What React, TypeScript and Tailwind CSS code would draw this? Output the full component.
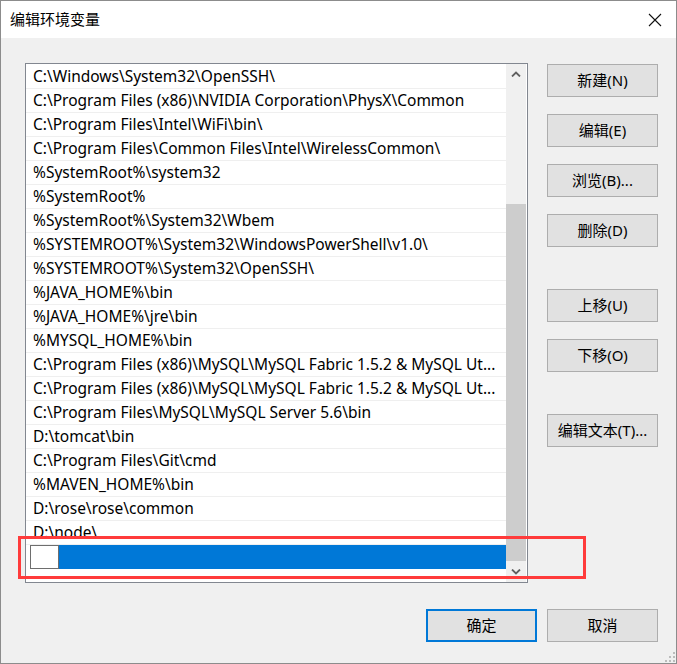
import React from "react";

const items = [
  "C:\\Windows\\System32\\OpenSSH\\",
  "C:\\Program Files (x86)\\NVIDIA Corporation\\PhysX\\Common",
  "C:\\Program Files\\Intel\\WiFi\\bin\\",
  "C:\\Program Files\\Common Files\\Intel\\WirelessCommon\\",
  "%SystemRoot%\\system32",
  "%SystemRoot%",
  "%SystemRoot%\\System32\\Wbem",
  "%SYSTEMROOT%\\System32\\WindowsPowerShell\\v1.0\\",
  "%SYSTEMROOT%\\System32\\OpenSSH\\",
  "%JAVA_HOME%\\bin",
  "%JAVA_HOME%\\jre\\bin",
  "%MYSQL_HOME%\\bin",
  "C:\\Program Files (x86)\\MySQL\\MySQL Fabric 1.5.2 & MySQL Ut...",
  "C:\\Program Files (x86)\\MySQL\\MySQL Fabric 1.5.2 & MySQL Ut...",
  "C:\\Program Files\\MySQL\\MySQL Server 5.6\\bin",
  "D:\\tomcat\\bin",
  "C:\\Program Files\\Git\\cmd",
  "%MAVEN_HOME%\\bin",
  "D:\\rose\\rose\\common",
  "D:\\node\\",
];

function Btn({ label, primary }: { label: string; primary?: boolean }) {
  return (
    <div
      className={
        "w-[111px] h-[33px] flex items-center justify-center bg-[#e1e1e1] text-[15px] text-black " +
        (primary ? "border-2 border-[#0078d7]" : "border border-[#adadad]")
      }
    >
      {label}
    </div>
  );
}

export default function App() {
  return (
    <div
      className="relative w-[677px] h-[664px] border border-[#8c8c8c] bg-[#f0f0f0] flex flex-col overflow-hidden"
      style={{ fontFamily: '"Noto Sans", "Noto Sans CJK SC", sans-serif' }}
    >
      {/* Title bar */}
      <div className="h-[37px] bg-white flex items-center justify-between pl-[9px] pr-[14px] shrink-0">
        <span className="text-[15px] text-black leading-none">编辑环境变量</span>
        <svg width="14" height="14" viewBox="0 0 14 14">
          <path d="M1 1 L13 13 M13 1 L1 13" stroke="#111" strokeWidth="1.1" fill="none" />
        </svg>
      </div>

      {/* Body */}
      <div className="flex flex-col pl-[24px] pr-[18px] pt-[25px]">
        <div className="flex items-start">
          {/* List box */}
          <div className="w-[503px] h-[520px] border border-[#828790] bg-white flex">
            <div className="w-[480px] pt-[1px] flex flex-col">
              {items.map((t, i) => (
                <div
                  key={i}
                  className="h-[24px] border-b border-[#efefef] pl-[7px] pt-[1px] flex items-center text-[15.5px] text-black whitespace-nowrap overflow-hidden leading-none"
                >
                  {t}
                </div>
              ))}
              <div className="h-[24px] flex pl-[4px]">
                <div className="w-[29px] h-[24px] border border-[#6e6e6e] bg-white" />
                <div className="flex-1 h-[24px] bg-[#0078d7]" />
              </div>
            </div>
            <div className="w-[20px] h-full bg-[#f0f0f0] flex flex-col">
              <div className="h-[20px] flex items-center justify-center">
                <svg width="10" height="6" viewBox="0 0 10 6">
                  <path d="M1 5.5 L5 1.5 L9 5.5" stroke="#606060" strokeWidth="1.8" fill="none" />
                </svg>
              </div>
              <div className="flex-1 pt-[120px]">
                <div className="h-[357px] bg-[#cdcdcd]" />
              </div>
              <div className="h-[21px] flex items-center justify-center">
                <svg width="10" height="6" viewBox="0 0 10 6">
                  <path d="M1 0.5 L5 4.5 L9 0.5" stroke="#606060" strokeWidth="1.8" fill="none" />
                </svg>
              </div>
            </div>
          </div>

          {/* Button column */}
          <div className="ml-[19px] pt-[1px] flex flex-col">
            <Btn label="新建(N)" />
            <div className="h-[17px]" />
            <Btn label="编辑(E)" />
            <div className="h-[17px]" />
            <Btn label="浏览(B)..." />
            <div className="h-[17px]" />
            <Btn label="删除(D)" />
            <div className="h-[42px]" />
            <Btn label="上移(U)" />
            <div className="h-[17px]" />
            <Btn label="下移(O)" />
            <div className="h-[42px]" />
            <Btn label="编辑文本(T)..." />
          </div>
        </div>

        {/* Bottom buttons */}
        <div className="mt-[26px] flex justify-end gap-[10px]">
          <Btn label="确定" primary />
          <Btn label="取消" />
        </div>
      </div>

      {/* Red annotation box */}
      <div className="absolute left-[17px] top-[535px] w-[568px] h-[43px] border-[3px] border-[#ff3b3b]" />

      {/* Resize grip */}
      <svg className="absolute right-[1px] bottom-[1px]" width="12" height="12" viewBox="0 0 12 12">
        <rect x="10" y="2" width="2" height="2" fill="#bcbcbc" />
        <rect x="6" y="6" width="2" height="2" fill="#bcbcbc" />
        <rect x="10" y="6" width="2" height="2" fill="#bcbcbc" />
        <rect x="2" y="10" width="2" height="2" fill="#bcbcbc" />
        <rect x="6" y="10" width="2" height="2" fill="#bcbcbc" />
        <rect x="10" y="10" width="2" height="2" fill="#bcbcbc" />
      </svg>
    </div>
  );
}
